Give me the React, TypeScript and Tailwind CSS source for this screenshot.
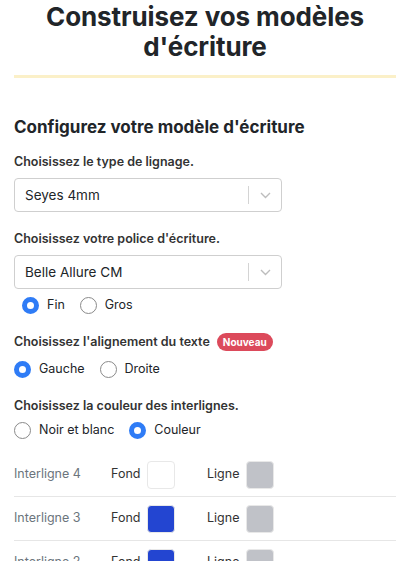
import { useState } from "react";

type RadioOpt = { value: string; label: string };

function Radio({
  checked,
  label,
  onClick,
}: {
  checked: boolean;
  label: string;
  onClick: () => void;
}) {
  return (
    <label className="flex items-center gap-[8px] cursor-pointer" onClick={onClick}>
      <span
        className={
          checked
            ? "h-[17px] w-[17px] rounded-full border-[5px] border-[#2f7cf6] bg-white"
            : "h-[17px] w-[17px] rounded-full border border-[#8a8a8a] bg-white"
        }
      />
      <span className="text-[12.5px] leading-[18px] text-[#212529]">{label}</span>
    </label>
  );
}

function RadioGroup({
  options,
  value,
  onChange,
  className,
}: {
  options: RadioOpt[];
  value: string;
  onChange: (v: string) => void;
  className?: string;
}) {
  return (
    <div className={"flex h-[18px] items-center gap-[15px] " + (className ?? "")}>
      {options.map((o) => (
        <Radio
          key={o.value}
          checked={value === o.value}
          label={o.label}
          onClick={() => onChange(o.value)}
        />
      ))}
    </div>
  );
}

function Select({ value }: { value: string }) {
  return (
    <div className="flex h-[34px] w-[268px] items-center rounded-[4px] border border-[#cfcfcf] bg-white">
      <span className="flex-1 pl-[10px] text-[13.5px] text-[#212529]">{value}</span>
      <span className="h-[18px] w-px bg-[#d4d4d4]" />
      <span className="flex w-[32px] justify-center">
        <svg width="11" height="7" viewBox="0 0 11 7" fill="none">
          <path d="M1 1l4.5 4.5L10 1" stroke="#bdbdbd" strokeWidth="1.4" />
        </svg>
      </span>
    </div>
  );
}

const rows = [
  { name: "Interligne 4", fond: "#ffffff", ligne: "#c0c2c8" },
  { name: "Interligne 3", fond: "#2345d1", ligne: "#c0c2c8" },
  { name: "Interligne 2", fond: "#2345d1", ligne: "#c0c2c8" },
  { name: "Interligne 1", fond: "#2345d1", ligne: "#c0c2c8" },
];

export default function App() {
  const [weight, setWeight] = useState("fin");
  const [align, setAlign] = useState("gauche");
  const [color, setColor] = useState("couleur");

  return (
    <main className="min-h-screen bg-white px-[14px] font-['Inter',sans-serif] text-[#212529]">
      {/* Header */}
      <h1 className="pt-[2px] text-center text-[26px] font-bold leading-[30px] tracking-[-0.1px]">
        Construisez vos modèles
        <br />
        d'écriture
      </h1>
      <div className="mt-[13px] h-[3px] w-full bg-[#fbf0c8]" />

      {/* Form */}
      <h2 className="mt-[37px] text-[17px] font-bold leading-[24px]">
        Configurez votre modèle d'écriture
      </h2>

      <p className="mt-[14px] text-[12.5px] font-semibold leading-[18px] text-[#333]">
        Choisissez le type de lignage.
      </p>
      <div className="mt-[7px]">
        <Select value="Seyes 4mm" />
      </div>

      <p className="mt-[18px] text-[12.5px] font-semibold leading-[18px] text-[#333]">
        Choisissez votre police d'écriture.
      </p>
      <div className="mt-[7px]">
        <Select value="Belle Allure CM" />
      </div>
      <RadioGroup
        className="mt-[7px] pl-[8px]"
        value={weight}
        onChange={setWeight}
        options={[
          { value: "fin", label: "Fin" },
          { value: "gros", label: "Gros" },
        ]}
      />

      <div className="mt-[19px] flex h-[18px] items-center gap-[7px]">
        <p className="text-[12.5px] font-semibold leading-[18px] text-[#333]">
          Choisissez l'alignement du texte
        </p>
        <span className="rounded-full bg-[#dc4a5b] px-[6px] text-[10px] font-bold leading-[18px] text-white">
          Nouveau
        </span>
      </div>
      <RadioGroup
        className="mt-[9px]"
        value={align}
        onChange={setAlign}
        options={[
          { value: "gauche", label: "Gauche" },
          { value: "droite", label: "Droite" },
        ]}
      />

      <p className="mt-[19px] text-[12.5px] font-semibold leading-[18px] text-[#333]">
        Choisissez la couleur des interlignes.
      </p>
      <RadioGroup
        className="mt-[6px]"
        value={color}
        onChange={setColor}
        options={[
          { value: "nb", label: "Noir et blanc" },
          { value: "couleur", label: "Couleur" },
        ]}
      />

      {/* Colour table */}
      <div className="mt-[14px]">
        {rows.map((r) => (
          <div
            key={r.name}
            className="flex h-[44px] items-center border-b border-[#e6e6e6] text-[12.5px]"
          >
            <span className="w-[97px] text-[#6c757d]">{r.name}</span>
            <span className="w-[36px] text-[#333]">Fond</span>
            <span
              className="h-[28px] w-[28px] rounded-[4px] border border-[#e8e8e8]"
              style={{ backgroundColor: r.fond }}
            />
            <span className="ml-[32px] w-[39px] text-[#333]">Ligne</span>
            <span
              className="h-[28px] w-[28px] rounded-[4px] border border-[#e8e8e8]"
              style={{ backgroundColor: r.ligne }}
            />
          </div>
        ))}
      </div>
    </main>
  );
}
